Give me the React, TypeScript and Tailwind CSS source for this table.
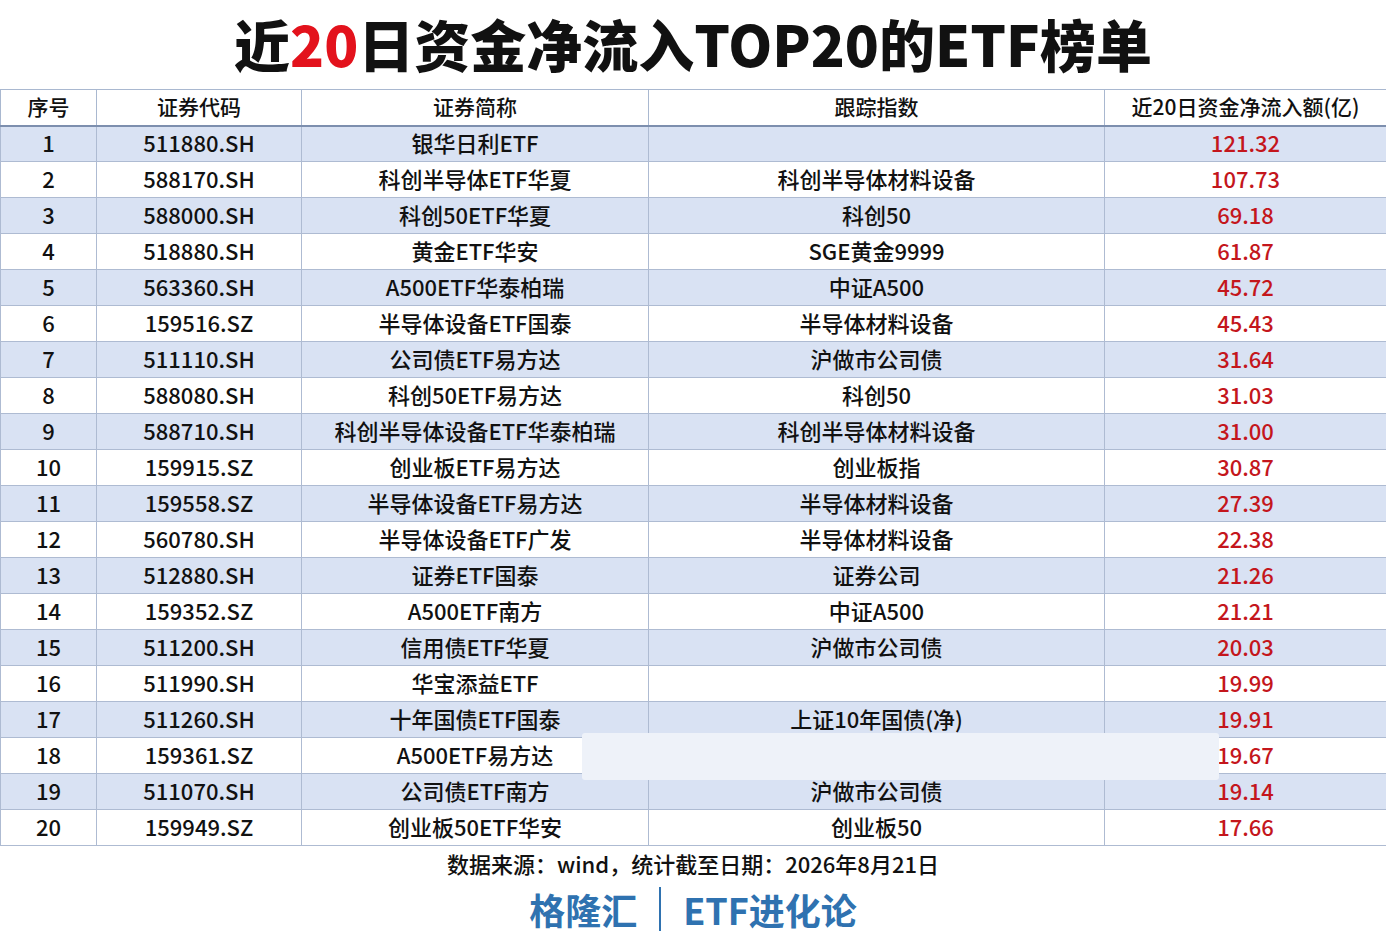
import React from "react";

type Row = [string, string, string, string, string];

const rows: Row[] = [
  ["1", "511880.SH", "银华日利ETF", "", "121.32"],
  ["2", "588170.SH", "科创半导体ETF华夏", "科创半导体材料设备", "107.73"],
  ["3", "588000.SH", "科创50ETF华夏", "科创50", "69.18"],
  ["4", "518880.SH", "黄金ETF华安", "SGE黄金9999", "61.87"],
  ["5", "563360.SH", "A500ETF华泰柏瑞", "中证A500", "45.72"],
  ["6", "159516.SZ", "半导体设备ETF国泰", "半导体材料设备", "45.43"],
  ["7", "511110.SH", "公司债ETF易方达", "沪做市公司债", "31.64"],
  ["8", "588080.SH", "科创50ETF易方达", "科创50", "31.03"],
  ["9", "588710.SH", "科创半导体设备ETF华泰柏瑞", "科创半导体材料设备", "31.00"],
  ["10", "159915.SZ", "创业板ETF易方达", "创业板指", "30.87"],
  ["11", "159558.SZ", "半导体设备ETF易方达", "半导体材料设备", "27.39"],
  ["12", "560780.SH", "半导体设备ETF广发", "半导体材料设备", "22.38"],
  ["13", "512880.SH", "证券ETF国泰", "证券公司", "21.26"],
  ["14", "159352.SZ", "A500ETF南方", "中证A500", "21.21"],
  ["15", "511200.SH", "信用债ETF华夏", "沪做市公司债", "20.03"],
  ["16", "511990.SH", "华宝添益ETF", "", "19.99"],
  ["17", "511260.SH", "十年国债ETF国泰", "上证10年国债(净)", "19.91"],
  ["18", "159361.SZ", "A500ETF易方达", "", "19.67"],
  ["19", "511070.SH", "公司债ETF南方", "沪做市公司债", "19.14"],
  ["20", "159949.SZ", "创业板50ETF华安", "创业板50", "17.66"],
];

const headers = ["序号", "证券代码", "证券简称", "跟踪指数", "近20日资金净流入额(亿)"];
const widths = ["w-[96px]", "w-[205px]", "w-[347px]", "w-[456px]", "w-[282px]"];

const font = "[font-family:'Noto_Sans_CJK_SC','Noto_Sans',sans-serif]";

export default function App() {
  return (
    <div className={`relative w-[1386px] h-[941px] bg-white text-[#111] ${font}`}>
      <h1 className="h-[89px] flex items-center justify-center pb-[4px] text-[56px] font-black leading-none">
        近<span className="text-[#e3121c]">20</span>日资金净流入TOP20的ETF榜单
      </h1>

      <table className="w-[1386px] border-collapse table-fixed">
        <colgroup>
          {widths.map((w, i) => (
            <col key={i} className={w} />
          ))}
        </colgroup>
        <thead>
          <tr className="h-[36px] bg-white">
            {headers.map((h, i) => (
              <th
                key={i}
                className="border border-[#a9b8d0] border-b-2 border-b-[#7d8fae] text-[21px] font-medium p-0 pb-[2px] leading-none"
              >
                {h}
              </th>
            ))}
          </tr>
        </thead>
        <tbody>
          {rows.map((r, idx) => (
            <tr key={idx} className={`h-[36px] ${idx % 2 === 0 ? "bg-[#d9e2f3]" : "bg-white"}`}>
              {r.map((c, i) => (
                <td
                  key={i}
                  className={`border border-[#aebbd2] text-center text-[22px] font-medium p-0 pb-[4px] leading-none ${
                    i === 4 ? "text-[#c4161c]" : ""
                  }`}
                >
                  {c}
                </td>
              ))}
            </tr>
          ))}
        </tbody>
      </table>

      <div className="mt-[1px] text-center text-[22px] font-medium leading-[32px]">
        数据来源：wind，统计截至日期：2026年8月21日
      </div>
      <div className="mt-[8px] flex items-center justify-center gap-[22px] text-[#2f72b0] text-[36px] font-bold leading-none">
        <span>格隆汇</span>
        <span className="w-[2px] h-[44px] bg-[#2f72b0]" />
        <span>ETF进化论</span>
      </div>

      <div className="absolute left-[582px] top-[733px] w-[637px] h-[47px] bg-[#eef2f9] rounded-[3px]" />
    </div>
  );
}
